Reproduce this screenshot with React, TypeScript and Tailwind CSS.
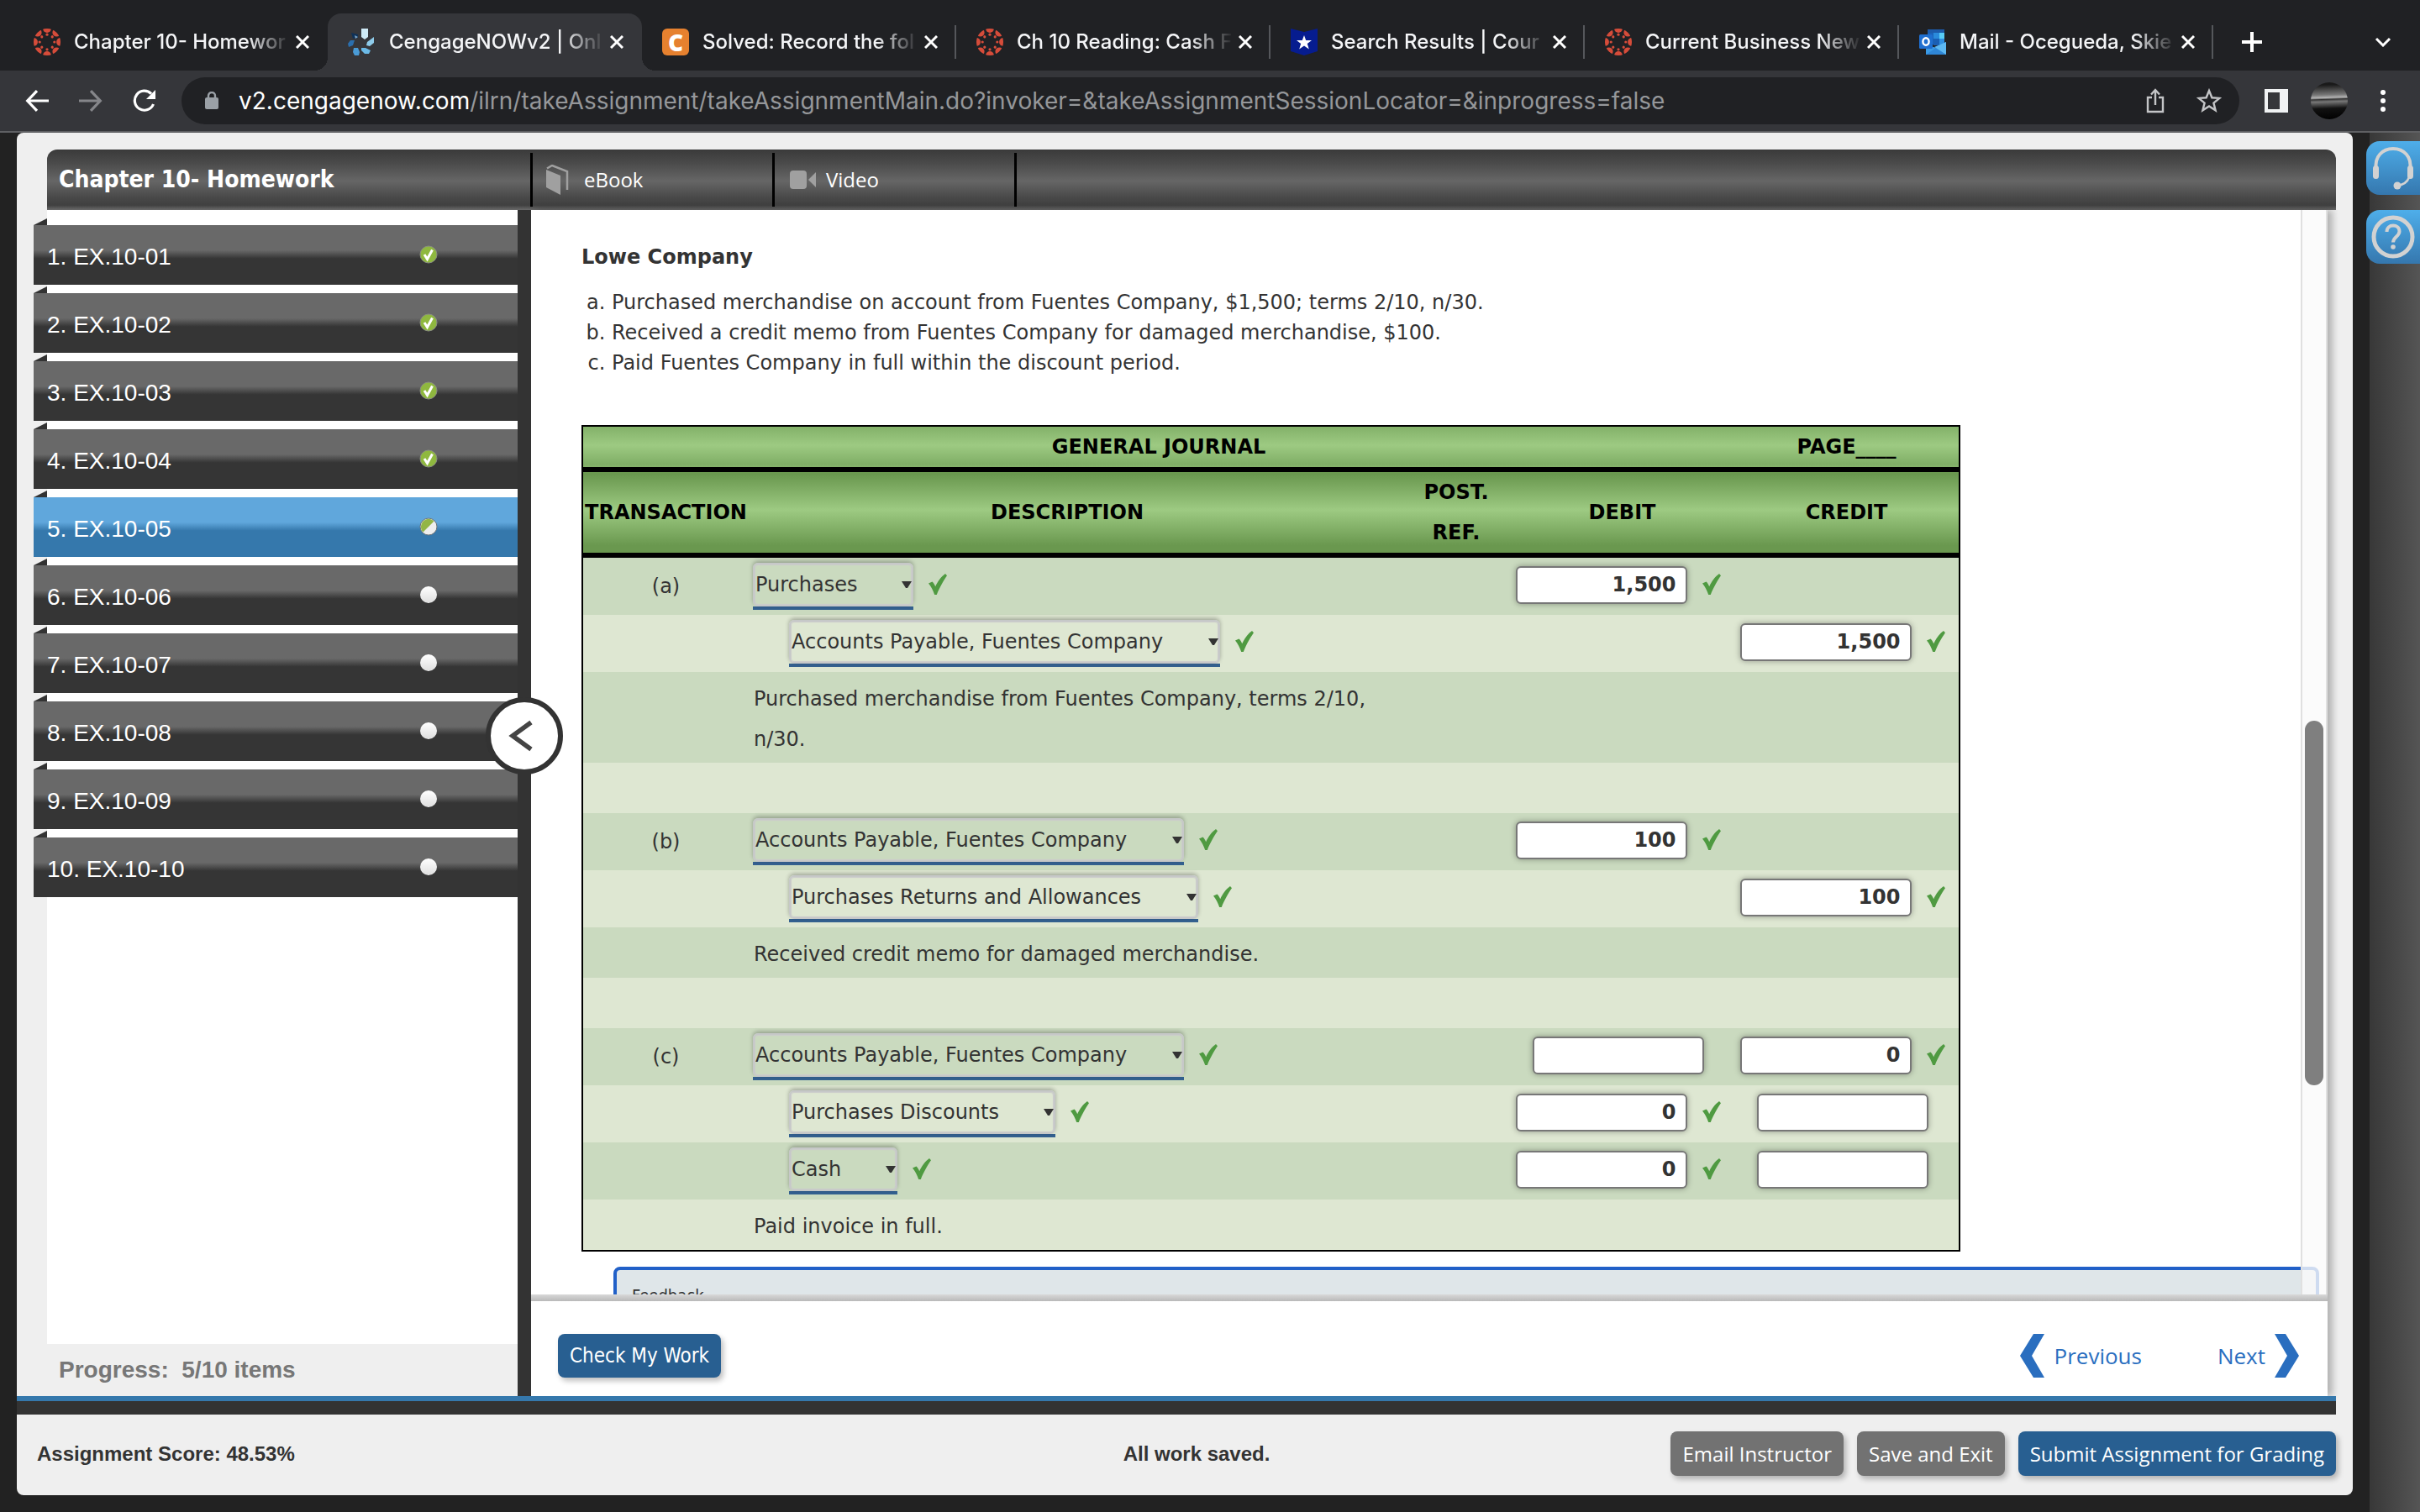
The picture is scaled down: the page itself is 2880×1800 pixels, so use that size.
import React from "react";

const verdana = "font-['DejaVu_Sans',sans-serif]";

/* ---------- icons ---------- */

function CanvasLogo() {
  const outer = [0, 45, 90, 135, 180, 225, 270, 315];
  return (
    <svg viewBox="-16 -16 32 32" className="size-8 shrink-0" aria-hidden="true">
      <defs>
        <clipPath id="canvas-disc">
          <circle r="16" />
        </clipPath>
      </defs>
      <g clipPath="url(#canvas-disc)" fill="#d64c3a">
        {outer.map((a) => (
          <g key={a} transform={`rotate(${a})`}>
            <circle cx="0" cy="-16" r="4.9" />
            <circle cx="0" cy="-8.8" r="1.6" />
          </g>
        ))}
      </g>
    </svg>
  );
}

function CengageLogo() {
  return (
    <svg viewBox="0 0 40 40" className="size-10 shrink-0 -m-1" aria-hidden="true">
      <path d="M20 4h8v10l-4 3-4-3z" fill="#cfeaf6" />
      <path d="M35 14v7l-5 4-4-1 1-4z" fill="#8ecbea" />
      <path d="M20 27l5 0 6 3-2 4-5 0-4-4z" fill="#6bb9e6" />
      <path d="M11 27h5l2 5-1 4h-5l-2-4z" fill="#4a9bd6" />
      <path d="M7 18h5l-2 6-5 2-1-4z" fill="#2b6fae" />
      <path d="M8 9l4 1 4 1v4l-6 1z" fill="#0f3157" />
      <path d="M12 12l4 2-3 2z" fill="#7fa8c8" />
    </svg>
  );
}

function CheggLogo() {
  return (
    <span className="flex size-8 shrink-0 items-center justify-center rounded-md bg-[#e6812f] font-['Open_Sans',sans-serif] text-[28px] leading-8 font-extrabold text-white">
      C
    </span>
  );
}

function CourseLogo() {
  return (
    <svg viewBox="0 0 32 32" className="size-8 shrink-0" aria-hidden="true">
      <path d="M0 0l16 4L32 0v27l-16 5L0 27z" fill="#061c8f" />
      <path d="M16 8l2.200 6H25l-5.200 4 2 6.500L16 20.600l-5.800 3.900 2-6.500L7 14h6.800z" fill="#fff" />
    </svg>
  );
}

function OutlookLogo() {
  return (
    <svg viewBox="0 0 32 30" className="h-[30px] w-8 shrink-0" aria-hidden="true">
      <path d="M10 0h20v5H10z" fill="#1c5bab" />
      <path d="M10 4h7v14h-7z" fill="#1b62b8" />
      <path d="M17 4h7v7h-7z" fill="#2a8bdc" />
      <path d="M24 4h6v7h-6z" fill="#58cdf7" />
      <path d="M17 11h7v8h-7z" fill="#1a5fb4" />
      <path d="M24 11h6v7h-6z" fill="#2f8ee0" />
      <path d="M8 18l12 4 12-7v15H8z" fill="#3a9be6" />
      <path d="M32 15v15L18 21z" fill="#5cb8f2" />
      <path d="M18 21l14 9H8l12-8z" fill="#2f86d6" />
      <rect x="0" y="6" width="16" height="17" rx="1.500" fill="#1f6fd0" />
      <ellipse cx="8" cy="14.500" rx="3.600" ry="4.200" fill="none" stroke="#fff" strokeWidth="2.400" />
    </svg>
  );
}

function Check({ className = "" }: { className?: string }) {
  return (
    <svg viewBox="0 0 22 25" className={`h-[25px] w-[22px] shrink-0 ${className}`} aria-label="Correct" role="img">
      <path d="M0 11.500 4.500 9.500c1.700 1.500 2.900 3.600 3.700 5.800C10.800 9.500 15 3.500 20 0L22 2.200C18 8 13 16.500 9.800 25H7.200C5.400 19.500 3.200 15.500 0 11.500z" fill="#4f9a41" />
    </svg>
  );
}

function Status({ state }: { state: string }) {
  return (
    <svg viewBox="0 0 22 22" className="size-[22px] shrink-0" role="img" aria-label={state}>
      <defs>
        <linearGradient id="white-ball" x1="0" y1="0" x2="0" y2="1">
          <stop offset="0" stopColor="#ffffff" />
          <stop offset="1" stopColor="#dedede" />
        </linearGradient>
      </defs>
      {state === "done" && (
        <>
          <circle cx="11" cy="11" r="10" fill="#8fb83f" stroke="#8a8f80" />
          <path d="M6 11l3.500 5.500L15.500 5.500" fill="none" stroke="#fff" strokeWidth="3" />
        </>
      )}
      {state === "partial" && (
        <>
          <circle cx="11" cy="11" r="10" fill="#eeeeee" stroke="#6d7478" />
          <path d="M4.500 17.500A9 9 0 0 1 17.500 4.500z" fill="#93b546" />
        </>
      )}
      {state === "open" && <circle cx="11" cy="11" r="10" fill="url(#white-ball)" />}
    </svg>
  );
}

/* ---------- browser chrome ---------- */

const tabs = [
  { title: "Chapter 10- Homewor", icon: <CanvasLogo /> },
  { title: "CengageNOWv2 | Onl", icon: <CengageLogo />, active: true },
  { title: "Solved: Record the fol", icon: <CheggLogo /> },
  { title: "Ch 10 Reading: Cash F", icon: <CanvasLogo /> },
  { title: "Search Results | Cour", icon: <CourseLogo /> },
  { title: "Current Business New", icon: <CanvasLogo /> },
  { title: "Mail - Ocegueda, Skie", icon: <OutlookLogo /> },
];

function TabStrip() {
  return (
    <div className="flex h-[84px] shrink-0 items-end bg-[#202124] pl-4 font-[Inter,sans-serif]">
      {tabs.map((t, i) => (
        <div
          key={t.title}
          className={
            t.active
              ? "relative flex h-[68px] w-[374px] min-w-0 items-center rounded-t-2xl bg-[#35363a] pr-4 pl-6 before:absolute before:bottom-0 before:-left-4 before:size-4 before:bg-[radial-gradient(circle_at_0_0,transparent_16px,#35363a_16px)] after:absolute after:-right-4 after:bottom-0 after:size-4 after:bg-[radial-gradient(circle_at_100%_0,transparent_16px,#35363a_16px)]"
              : "flex h-[68px] w-[374px] min-w-0 items-center pr-4 pl-6"
          }
        >
          {t.icon}
          <span
            className={
              t.active
                ? "ml-[17px] min-w-0 flex-1 overflow-hidden text-[24px] leading-8 font-medium whitespace-nowrap text-[#f4f5f7] [mask-image:linear-gradient(to_right,#000_80%,transparent)]"
                : "ml-4 min-w-0 flex-1 overflow-hidden text-[24px] leading-8 font-medium whitespace-nowrap text-[#f4f5f7] [mask-image:linear-gradient(to_right,#000_80%,transparent)]"
            }
          >
            {t.title}
          </span>
          <button aria-label={`Close ${t.title}`} className="flex size-7 shrink-0 items-center justify-center">
            <svg viewBox="0 0 16 16" className="size-4 text-white" aria-hidden="true">
              <path d="M1 1l14 14M15 1L1 15" stroke="currentColor" strokeWidth="3" />
            </svg>
          </button>
          {i > 1 && <span className="-mr-4 ml-[14px] h-10 w-[2px] shrink-0 bg-[#55575b]" />}
        </div>
      ))}
      <button aria-label="New tab" className="ml-8 flex h-[68px] w-7 items-center justify-center">
        <svg viewBox="0 0 24 24" className="size-6" aria-hidden="true">
          <path d="M12 0v24M0 12h24" stroke="#fff" strokeWidth="4" />
        </svg>
      </button>
      <button aria-label="Search tabs" className="mr-8 ml-auto flex h-[68px] w-6 items-center justify-center">
        <svg viewBox="0 0 20 12" className="h-3 w-5" aria-hidden="true">
          <path d="M2 2l8 8 8-8" fill="none" stroke="#fff" strokeWidth="3" />
        </svg>
      </button>
    </div>
  );
}

function Toolbar() {
  return (
    <div className="flex h-[74px] shrink-0 items-center border-b-2 border-[#5f6063] bg-[#35363a] pr-[38px] pl-7 font-[Inter,sans-serif]">
      <button aria-label="Back" className="flex size-8 items-center justify-center">
        <svg viewBox="0 0 26 26" className="size-7" aria-hidden="true">
          <path d="M26 13H3M13 2L2.500 13 13 24" fill="none" stroke="#fff" strokeWidth="3" />
        </svg>
      </button>
      <button aria-label="Forward" className="ml-8 flex size-8 items-center justify-center">
        <svg viewBox="0 0 26 26" className="size-7" aria-hidden="true">
          <path d="M0 13h23M13 2l10.500 11L13 24" fill="none" stroke="#85868a" strokeWidth="3" />
        </svg>
      </button>
      <button aria-label="Reload" className="ml-8 flex size-8 items-center justify-center">
        <svg viewBox="0 0 28 28" className="size-7" aria-hidden="true">
          <path d="M24.500 18A11.500 11.500 0 1 1 22 5.600" fill="none" stroke="#fff" strokeWidth="3.200" />
          <path d="M27 1v11H16z" fill="#fff" />
        </svg>
      </button>
      <div className="ml-7 flex h-14 min-w-0 flex-1 items-center rounded-full bg-[#202124] pr-5 pl-7">
        <svg viewBox="0 0 16 22" className="h-[22px] w-4 shrink-0" aria-hidden="true">
          <rect y="7" width="16" height="14" rx="2" fill="#9aa0a6" />
          <path d="M4 8V5a4 4 0 0 1 8 0v3" fill="none" stroke="#9aa0a6" strokeWidth="2.400" />
        </svg>
        <p className="ml-6 min-w-0 flex-1 overflow-hidden text-[28px] leading-9 whitespace-nowrap text-[#95979a]">
          <span className="text-white">v2.cengagenow.com</span>
          /ilrn/takeAssignment/takeAssignmentMain.do?invoker=&amp;takeAssignmentSessionLocator=&amp;inprogress=false
        </p>
        <button aria-label="Share" className="flex size-8 items-center justify-center">
          <svg viewBox="0 0 22 30" className="h-[30px] w-[22px]" aria-hidden="true">
            <path d="M7 11H2v17h18V11h-5M11 20V3M6 7.500L11 2l5 5.500" fill="none" stroke="#c4c5c7" strokeWidth="2.400" />
          </svg>
        </button>
        <button aria-label="Bookmark" className="ml-8 flex size-8 items-center justify-center">
          <svg viewBox="0 0 30 30" className="size-[30px]" aria-hidden="true">
            <path
              d="M15 3l3.400 8.300 8.900.6-6.900 5.700 2.200 8.700L15 21.500l-7.600 4.800 2.200-8.700-6.900-5.700 8.900-.6z"
              fill="none"
              stroke="#c4c5c7"
              strokeWidth="2.400"
            />
          </svg>
        </button>
      </div>
      <button aria-label="Side panel" className="ml-7 flex h-8 w-8 items-center justify-center">
        <svg viewBox="0 0 28 28" className="size-7" aria-hidden="true">
          <path d="M0 0h28v28H0zM4 4v20h14V4z" fill="#f1f3f4" fillRule="evenodd" />
        </svg>
      </button>
      <button
        aria-label="Profile"
        className="ml-[25px] size-11 rounded-full bg-[linear-gradient(178deg,#1a1a1a_8%,#777_34%,#b5b5b5_42%,#333_46%,#777_52%,#555_58%,#111_70%,#000_100%)]"
      />
      <button aria-label="Menu" className="ml-9 flex w-3 flex-col items-center gap-1">
        <span className="size-[6px] rounded-full bg-white" />
        <span className="size-[6px] rounded-full bg-white" />
        <span className="size-[6px] rounded-full bg-white" />
      </button>
    </div>
  );
}

/* ---------- header and sidebar ---------- */

function HeaderBar() {
  return (
    <header className="mr-5 ml-9 flex h-[72px] shrink-0 items-stretch rounded-t-xl bg-[linear-gradient(#3a3a3a,#4a4a4a_22%,#666_52%,#484848_80%,#404040_92%,#6a6a6a)] font-['Open_Sans',sans-serif] text-white">
      <h1 className="flex w-[575px] shrink-0 items-center pl-[14px] font-['DejaVu_Sans_Condensed',sans-serif] text-[28px] leading-9 font-bold">
        Chapter 10- Homework
      </h1>
      <a href="#ebook" className="my-1 flex w-[288px] items-center border-l-[3px] border-black pl-4 text-[24px] leading-8">
        <svg viewBox="0 0 27 36" className="h-9 w-[27px]" aria-hidden="true">
          <path d="M0 6l17 7v23L0 27z" fill="#a0a0a0" />
          <path d="M1 4.500L7 1l18 7v22" fill="none" stroke="#a0a0a0" strokeWidth="2.500" />
        </svg>
        <span className="ml-[18px]">eBook</span>
      </a>
      <a href="#video" className="my-1 flex w-[291px] items-center border-x-[3px] border-black pl-[18px] text-[24px] leading-8">
        <svg viewBox="0 0 32 24" className="h-6 w-8" aria-hidden="true">
          <rect y="1" width="20" height="22" rx="4" fill="#a0a0a0" />
          <path d="M22 12l9-9v18z" fill="#a0a0a0" />
        </svg>
        <span className="ml-[11px]">Video</span>
      </a>
    </header>
  );
}

const exercises = [
  { name: "EX.10-01", state: "done" },
  { name: "EX.10-02", state: "done" },
  { name: "EX.10-03", state: "done" },
  { name: "EX.10-04", state: "done" },
  { name: "EX.10-05", state: "partial", active: true },
  { name: "EX.10-06", state: "open" },
  { name: "EX.10-07", state: "open" },
  { name: "EX.10-08", state: "open" },
  { name: "EX.10-09", state: "open" },
  { name: "EX.10-10", state: "open" },
];

function Sidebar() {
  return (
    <nav className="flex w-[596px] shrink-0 flex-col font-['Liberation_Sans',sans-serif]" aria-label="Assignment items">
      <div className="ml-9 flex-1 bg-white pt-2">
        <ul className="-ml-4 flex flex-col">
          {exercises.map((e, i) => (
            <li key={e.name}>
              <span className="mt-[2px] block h-2 w-4 bg-[#333] [clip-path:polygon(0_100%,100%_0,100%_100%)]" />
              <a
                href={`#item-${i + 1}`}
                className={
                  e.active
                    ? "flex h-[71px] items-center bg-[linear-gradient(#60a7dc_42%,#3578ac_56%)] pr-[95px] pl-4 text-[28px] leading-9 text-white"
                    : "flex h-[71px] items-center bg-[linear-gradient(#696969_42%,#353535_56%)] pr-[95px] pl-4 text-[28px] leading-9 text-white"
                }
              >
                <span className="pt-1">
                  {i + 1}. {e.name}
                </span>
                <span className="ml-auto pb-[2px]">
                  <Status state={e.state} />
                </span>
              </a>
            </li>
          ))}
        </ul>
      </div>
      <p className="ml-9 flex h-[62px] shrink-0 items-center pl-[14px] text-[28px] leading-9 font-bold whitespace-pre text-[#777]">
        Progress:  5/10 items
      </p>
    </nav>
  );
}

/* ---------- journal ---------- */

function Pick({ value, width }: { value: string; width: string }) {
  return (
    <span className={`relative inline-block border-b-4 border-[#33608f] ${width}`}>
      <select
        aria-label={value}
        className="block h-[52px] w-full appearance-none rounded-md border-2 border-[#c6c8c8] bg-transparent pl-px text-[24px] text-[#333] shadow-[0_-2px_5px_0_rgba(0,0,0,0.28),inset_0_0_1px_1px_#cbcbcb]"
      >
        <option>{value}</option>
      </select>
      <svg viewBox="0 0 12 8" className="pointer-events-none absolute top-[22px] right-[2px] h-2 w-3" aria-hidden="true">
        <path d="M0 0h12L7 8H5z" fill="#333" />
      </svg>
    </span>
  );
}

function Amount({ value, label }: { value: string; label: string }) {
  return (
    <span className="flex items-center justify-center pr-[10px] pb-1">
      <input
        aria-label={label}
        defaultValue={value}
        className="h-[45px] w-[204px] rounded-md border-2 border-[#777] bg-white pr-[11px] text-right text-[24px] font-bold text-[#333] shadow-[0_0_7px_rgba(0,0,0,0.35)]"
      />
      {value !== "" && <Check className="mb-[2px] ml-[18px]" />}
    </span>
  );
}

type Row = {
  tag?: string;
  pick?: string;
  width?: string;
  indent?: boolean;
  note?: string;
  debit?: string;
  credit?: string;
};

const rows: Row[] = [
  { tag: "(a)", pick: "Purchases", width: "w-[191px]", debit: "1,500" },
  { pick: "Accounts Payable, Fuentes Company", width: "w-[513px]", indent: true, credit: "1,500" },
  { note: "Purchased merchandise from Fuentes Company, terms 2/10, n/30." },
  { note: "" },
  { tag: "(b)", pick: "Accounts Payable, Fuentes Company", width: "w-[513px]", debit: "100" },
  { pick: "Purchases Returns and Allowances", width: "w-[487px]", indent: true, credit: "100" },
  { note: "Received credit memo for damaged merchandise." },
  { note: "" },
  { tag: "(c)", pick: "Accounts Payable, Fuentes Company", width: "w-[513px]", debit: "", credit: "0" },
  { pick: "Purchases Discounts", width: "w-[317px]", indent: true, debit: "0", credit: "" },
  { pick: "Cash", width: "w-[129px]", indent: true, debit: "0", credit: "" },
  { note: "Paid invoice in full." },
];

function Journal() {
  return (
    <table className="mt-14 w-[1639px] table-fixed border-collapse border-2 border-black text-[24px] leading-[48px] text-[#333]">
      <colgroup>
        <col className="w-[198px]" />
        <col className="w-[758px]" />
        <col className="w-[148px]" />
        <col className="w-[267px]" />
        <col className="w-[268px]" />
      </colgroup>
      <thead className="font-bold text-black">
        <tr className="border-b-[6px] border-black bg-[linear-gradient(#82b068,#9dca82_50%,#80ae66)]">
          <th colSpan={4} className="p-0">
            GENERAL JOURNAL
          </th>
          <th className="p-0">PAGE____</th>
        </tr>
        <tr className="border-b-[6px] border-black bg-[linear-gradient(#6a984f_6%,#9dca82_50%,#6a984f_94%)]">
          <th className="p-0">TRANSACTION</th>
          <th className="p-0">DESCRIPTION</th>
          <th className="p-0 pl-5">
            POST.
            <br />
            REF.
          </th>
          <th className="p-0">DEBIT</th>
          <th className="p-0">CREDIT</th>
        </tr>
      </thead>
      <tbody>
        {rows.map((r, i) => (
          <tr key={i} className="odd:bg-[#cadabf] even:bg-[#dee7d2]">
            <td className="p-0 text-center">{r.tag}</td>
            <td className="p-0 pl-[5px]">
              {r.pick ? (
                <span className={r.indent ? "flex h-[68px] items-center pl-[43px]" : "flex h-[68px] items-center"}>
                  <Pick value={r.pick} width={r.width ?? ""} />
                  <Check className="mb-[6px] ml-[18px]" />
                </span>
              ) : (
                <p className="min-h-[60px] pt-2 pb-1 pl-px">{r.note}</p>
              )}
            </td>
            <td className="p-0" />
            <td className="p-0">{r.debit !== undefined && <Amount value={r.debit} label={`Debit, line ${i + 1}`} />}</td>
            <td className="p-0">{r.credit !== undefined && <Amount value={r.credit} label={`Credit, line ${i + 1}`} />}</td>
          </tr>
        ))}
      </tbody>
    </table>
  );
}

function Content() {
  return (
    <main className={`flex min-w-0 flex-1 flex-col bg-white shadow-[6px_0_8px_rgba(0,0,0,0.25)] ${verdana}`}>
      <div className="relative min-h-0 flex-1 overflow-hidden pl-[60px]">
        <div className="pt-[38px] text-[24px] leading-9 text-[#333]">
          <h2 className="font-bold">Lowe Company</h2>
          <ol className="mt-[18px] list-[lower-alpha] pl-9">
            <li>Purchased merchandise on account from Fuentes Company, $1,500; terms 2/10, n/30.</li>
            <li>Received a credit memo from Fuentes Company for damaged merchandise, $100.</li>
            <li>Paid Fuentes Company in full within the discount period.</li>
          </ol>
          <Journal />
        </div>
        <section className="mt-[18px] mr-[10px] ml-[38px] h-40 rounded-lg border-4 border-[#2160c8] bg-[#dfe6e9] px-[18px] pt-[14px] font-['DejaVu_Sans_Condensed',sans-serif] text-[20px] leading-8 text-[#333]">
          Feedback
        </section>
        <div className="absolute inset-y-0 right-0 w-8 border-x-2 border-[#e0e0e0] bg-[#fafafa]/80">
          <div className="mx-[3px] mt-[608px] h-[434px] rounded-full bg-[#7f7f7f]" />
        </div>
        <div className="absolute inset-x-0 bottom-0 h-2 bg-[linear-gradient(#d8d8d8,#b9b9b9)]" />
      </div>
      <div className="flex h-[113px] shrink-0 items-center bg-white pt-4 pr-[34px] pl-8 font-['Open_Sans',sans-serif] text-[#2a6ebf]">
        <button className="h-[52px] rounded-lg bg-[#285f91] px-[14px] font-['DejaVu_Sans_Condensed',sans-serif] text-[24px] leading-8 text-white shadow-[3px_4px_6px_rgba(0,0,0,0.25)]">
          Check My Work
        </button>
        <a href="#previous" className="ml-auto flex items-center gap-[11px] text-[26px] leading-9">
          <svg viewBox="0 0 30 52" className="h-[52px] w-[30px]" aria-hidden="true">
            <path d="M16 0h13L14 26l15 26H16L0 26z" fill="#2a6ebf" />
          </svg>
          Previous
        </a>
        <a href="#next" className="ml-[90px] flex items-center gap-[10px] text-[26px] leading-9">
          Next
          <svg viewBox="0 0 30 52" className="h-[52px] w-[30px]" aria-hidden="true">
            <path d="M14 0H1l15 26L1 52h13l16-26z" fill="#2a6ebf" />
          </svg>
        </a>
      </div>
    </main>
  );
}

function StatusBar() {
  return (
    <footer className="flex h-24 shrink-0 items-center pr-5 pb-[3px] pl-6 font-['Liberation_Sans',sans-serif] text-[24px] leading-8 font-bold text-[#333]">
      <p className="flex-1">Assignment Score: 48.53%</p>
      <p className="pl-6">All work saved.</p>
      <div className="flex flex-1 justify-end gap-4 font-['Open_Sans',sans-serif] font-medium text-white">
        <button className="h-[53px] rounded-lg bg-[#727272] px-[14px] whitespace-nowrap shadow-[3px_4px_6px_rgba(0,0,0,0.25)]">Email Instructor</button>
        <button className="h-[53px] rounded-lg bg-[#727272] px-[14px] whitespace-nowrap shadow-[3px_4px_6px_rgba(0,0,0,0.25)]">Save and Exit</button>
        <button className="h-[53px] rounded-lg bg-[#285f91] px-[14px] whitespace-nowrap shadow-[3px_4px_6px_rgba(0,0,0,0.25)]">
          Submit Assignment for Grading
        </button>
      </div>
    </footer>
  );
}

function HelpRail() {
  return (
    <aside className="flex w-[60px] shrink-0 flex-col items-end gap-[18px] bg-[linear-gradient(to_right,#383838,#555)] pt-[10px]">
      <button aria-label="Support" className="flex h-16 w-16 items-center justify-center rounded-l-2xl bg-[linear-gradient(#4eaeea,#3577ae)]">
        <svg viewBox="0 0 52 52" className="size-[52px]" aria-hidden="true">
          <path d="M6 28C3 12 14 3 26 3s23 9 20 25" fill="none" stroke="#d2d2d2" strokeWidth="4" />
          <rect x="2" y="23" width="7" height="16" rx="3.500" fill="#d2d2d2" />
          <rect x="43" y="23" width="7" height="16" rx="3.500" fill="#d2d2d2" />
          <path d="M45 37c-2 6-7 9-14 10" fill="none" stroke="#d2d2d2" strokeWidth="2.500" />
          <circle cx="31" cy="47" r="4.500" fill="#d2d2d2" />
        </svg>
      </button>
      <button aria-label="Help" className="flex h-16 w-16 items-center justify-center rounded-l-2xl bg-[linear-gradient(#4eaeea,#3577ae)]">
        <svg viewBox="0 0 52 52" className="size-[52px]" aria-hidden="true">
          <circle cx="26" cy="26" r="23" fill="none" stroke="#d2d2d2" strokeWidth="5" />
          <path d="M18.500 20c0-5 3.500-7.500 7.500-7.500s7.500 2.500 7.500 7c0 6-7.500 6.500-7.500 13" fill="none" stroke="#d2d2d2" strokeWidth="4" />
          <circle cx="26" cy="38" r="2.800" fill="#d2d2d2" />
        </svg>
      </button>
    </aside>
  );
}

export default function App() {
  return (
    <div className="flex h-screen flex-col overflow-hidden bg-[#222]">
      <TabStrip />
      <Toolbar />
      <div className="flex min-h-0 flex-1">
        <div className="mr-5 mb-5 ml-5 flex min-w-0 flex-1 flex-col rounded-lg bg-[#efefef] pt-5">
          <HeaderBar />
          <div className="flex min-h-0 flex-1 pr-[30px]">
            <Sidebar />
            <div className="relative z-10 w-4 shrink-0 bg-[#333]">
              <button
                aria-label="Collapse sidebar"
                className="absolute top-[580px] -left-[38px] flex size-[92px] items-center justify-center rounded-full border-[6px] border-[#333] bg-white"
              >
                <svg viewBox="0 0 30 38" className="mr-2 h-[38px] w-[30px]" aria-hidden="true">
                  <path d="M27 3L5 19l22 16" fill="none" stroke="#444" strokeWidth="5.500" />
                </svg>
              </button>
            </div>
            <Content />
          </div>
          <div className="relative mr-5 h-[22px] shrink-0 border-t-[6px] border-[#3578ac] bg-[#333]" />
          <StatusBar />
        </div>
        <HelpRail />
      </div>
    </div>
  );
}
